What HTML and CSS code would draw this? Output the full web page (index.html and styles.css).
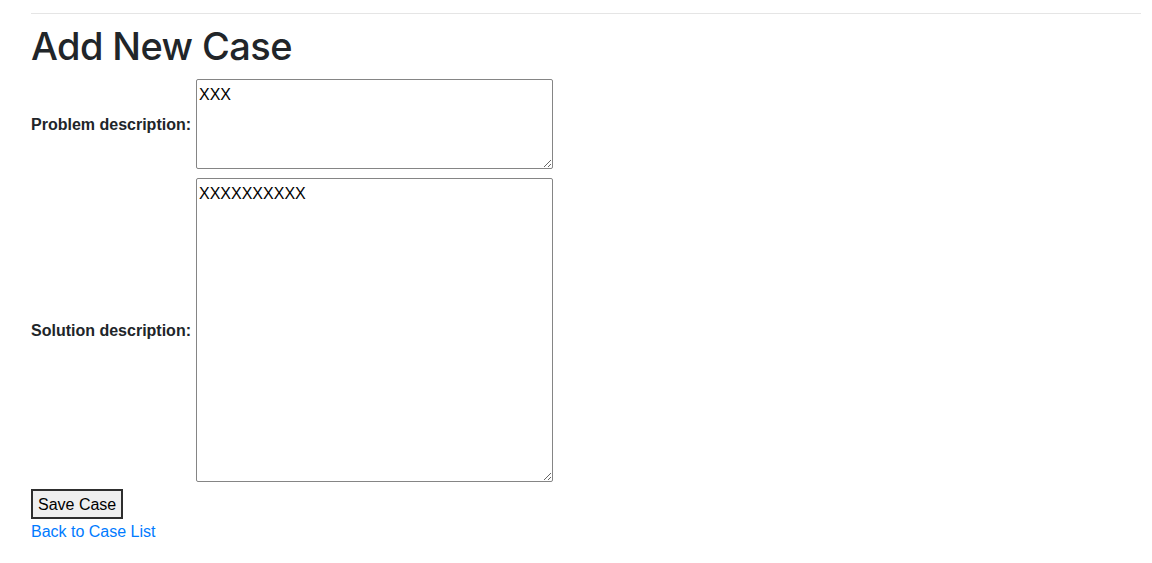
FILE: index.html
```html
<!DOCTYPE html>
<html lang="en">
<head>
<meta charset="utf-8">
<title>Add New Case</title>
<link rel="stylesheet" href="styles.css">
</head>
<body>
<div class="page">
  <hr class="rule">
  <h1 class="title">Add New Case</h1>
  <form class="case-form">
    <div class="fields">
      <label class="field-label" for="problem">Problem description:</label>
      <textarea id="problem" class="field-input field-input--short">XXX</textarea>
      <label class="field-label" for="solution">Solution description:</label>
      <textarea id="solution" class="field-input field-input--tall">XXXXXXXXXX</textarea>
    </div>
    <button type="submit" class="save-btn">Save Case</button>
  </form>
  <a class="back-link" href="#">Back to Case List</a>
</div>
</body>
</html>
```

FILE: styles.css
```css
html, body {
  margin: 0;
  padding: 0;
  background: #ffffff;
}

body {
  font-family: "Liberation Sans", Arial, sans-serif;
  font-size: 16px;
  line-height: 24px;
  color: #212529;
}

.page {
  padding: 0 11px 0 31px;
}

.rule {
  margin: 13px 0 0;
  border: 0;
  border-top: 1px solid rgba(0, 0, 0, 0.1);
  height: 0;
}

.title {
  margin: 8px 0 9px;
  font-family: Inter, "Liberation Sans", Arial, sans-serif;
  font-size: 38px;
  line-height: 48px;
  font-weight: 500;
  letter-spacing: -0.6px;
  color: #212529;
}

.case-form {
  margin: 0;
}

.fields {
  display: grid;
  grid-template-columns: 165px 357px;
  row-gap: 9px;
  align-items: center;
}

.field-label {
  padding-top: 2px;
  font-weight: 700;
  font-size: 16px;
  line-height: 24px;
  color: #212529;
  white-space: nowrap;
}

.field-input {
  box-sizing: border-box;
  width: 357px;
  margin: 0;
  padding: 3px 2px 1px;
  border: 1px solid #858585;
  border-radius: 2px;
  font-family: "Liberation Sans", Arial, sans-serif;
  font-size: 16px;
  line-height: 24px;
  color: #000000;
  background: #ffffff;
  display: block;
}

.field-input--short {
  height: 90px;
}

.field-input--tall {
  height: 304px;
}

.save-btn {
  display: block;
  margin: 7px 0 0;
  padding: 2px 5px 0;
  border: 2px solid #2e2e2e;
  border-radius: 0;
  background: #efefef;
  color: #000000;
  font-family: "Liberation Sans", Arial, sans-serif;
  font-size: 16px;
  line-height: 24px;
}

.back-link {
  display: inline-block;
  padding-top: 1px;
  color: #007bff;
  text-decoration: none;
  font-size: 16px;
  line-height: 24px;
}
```
